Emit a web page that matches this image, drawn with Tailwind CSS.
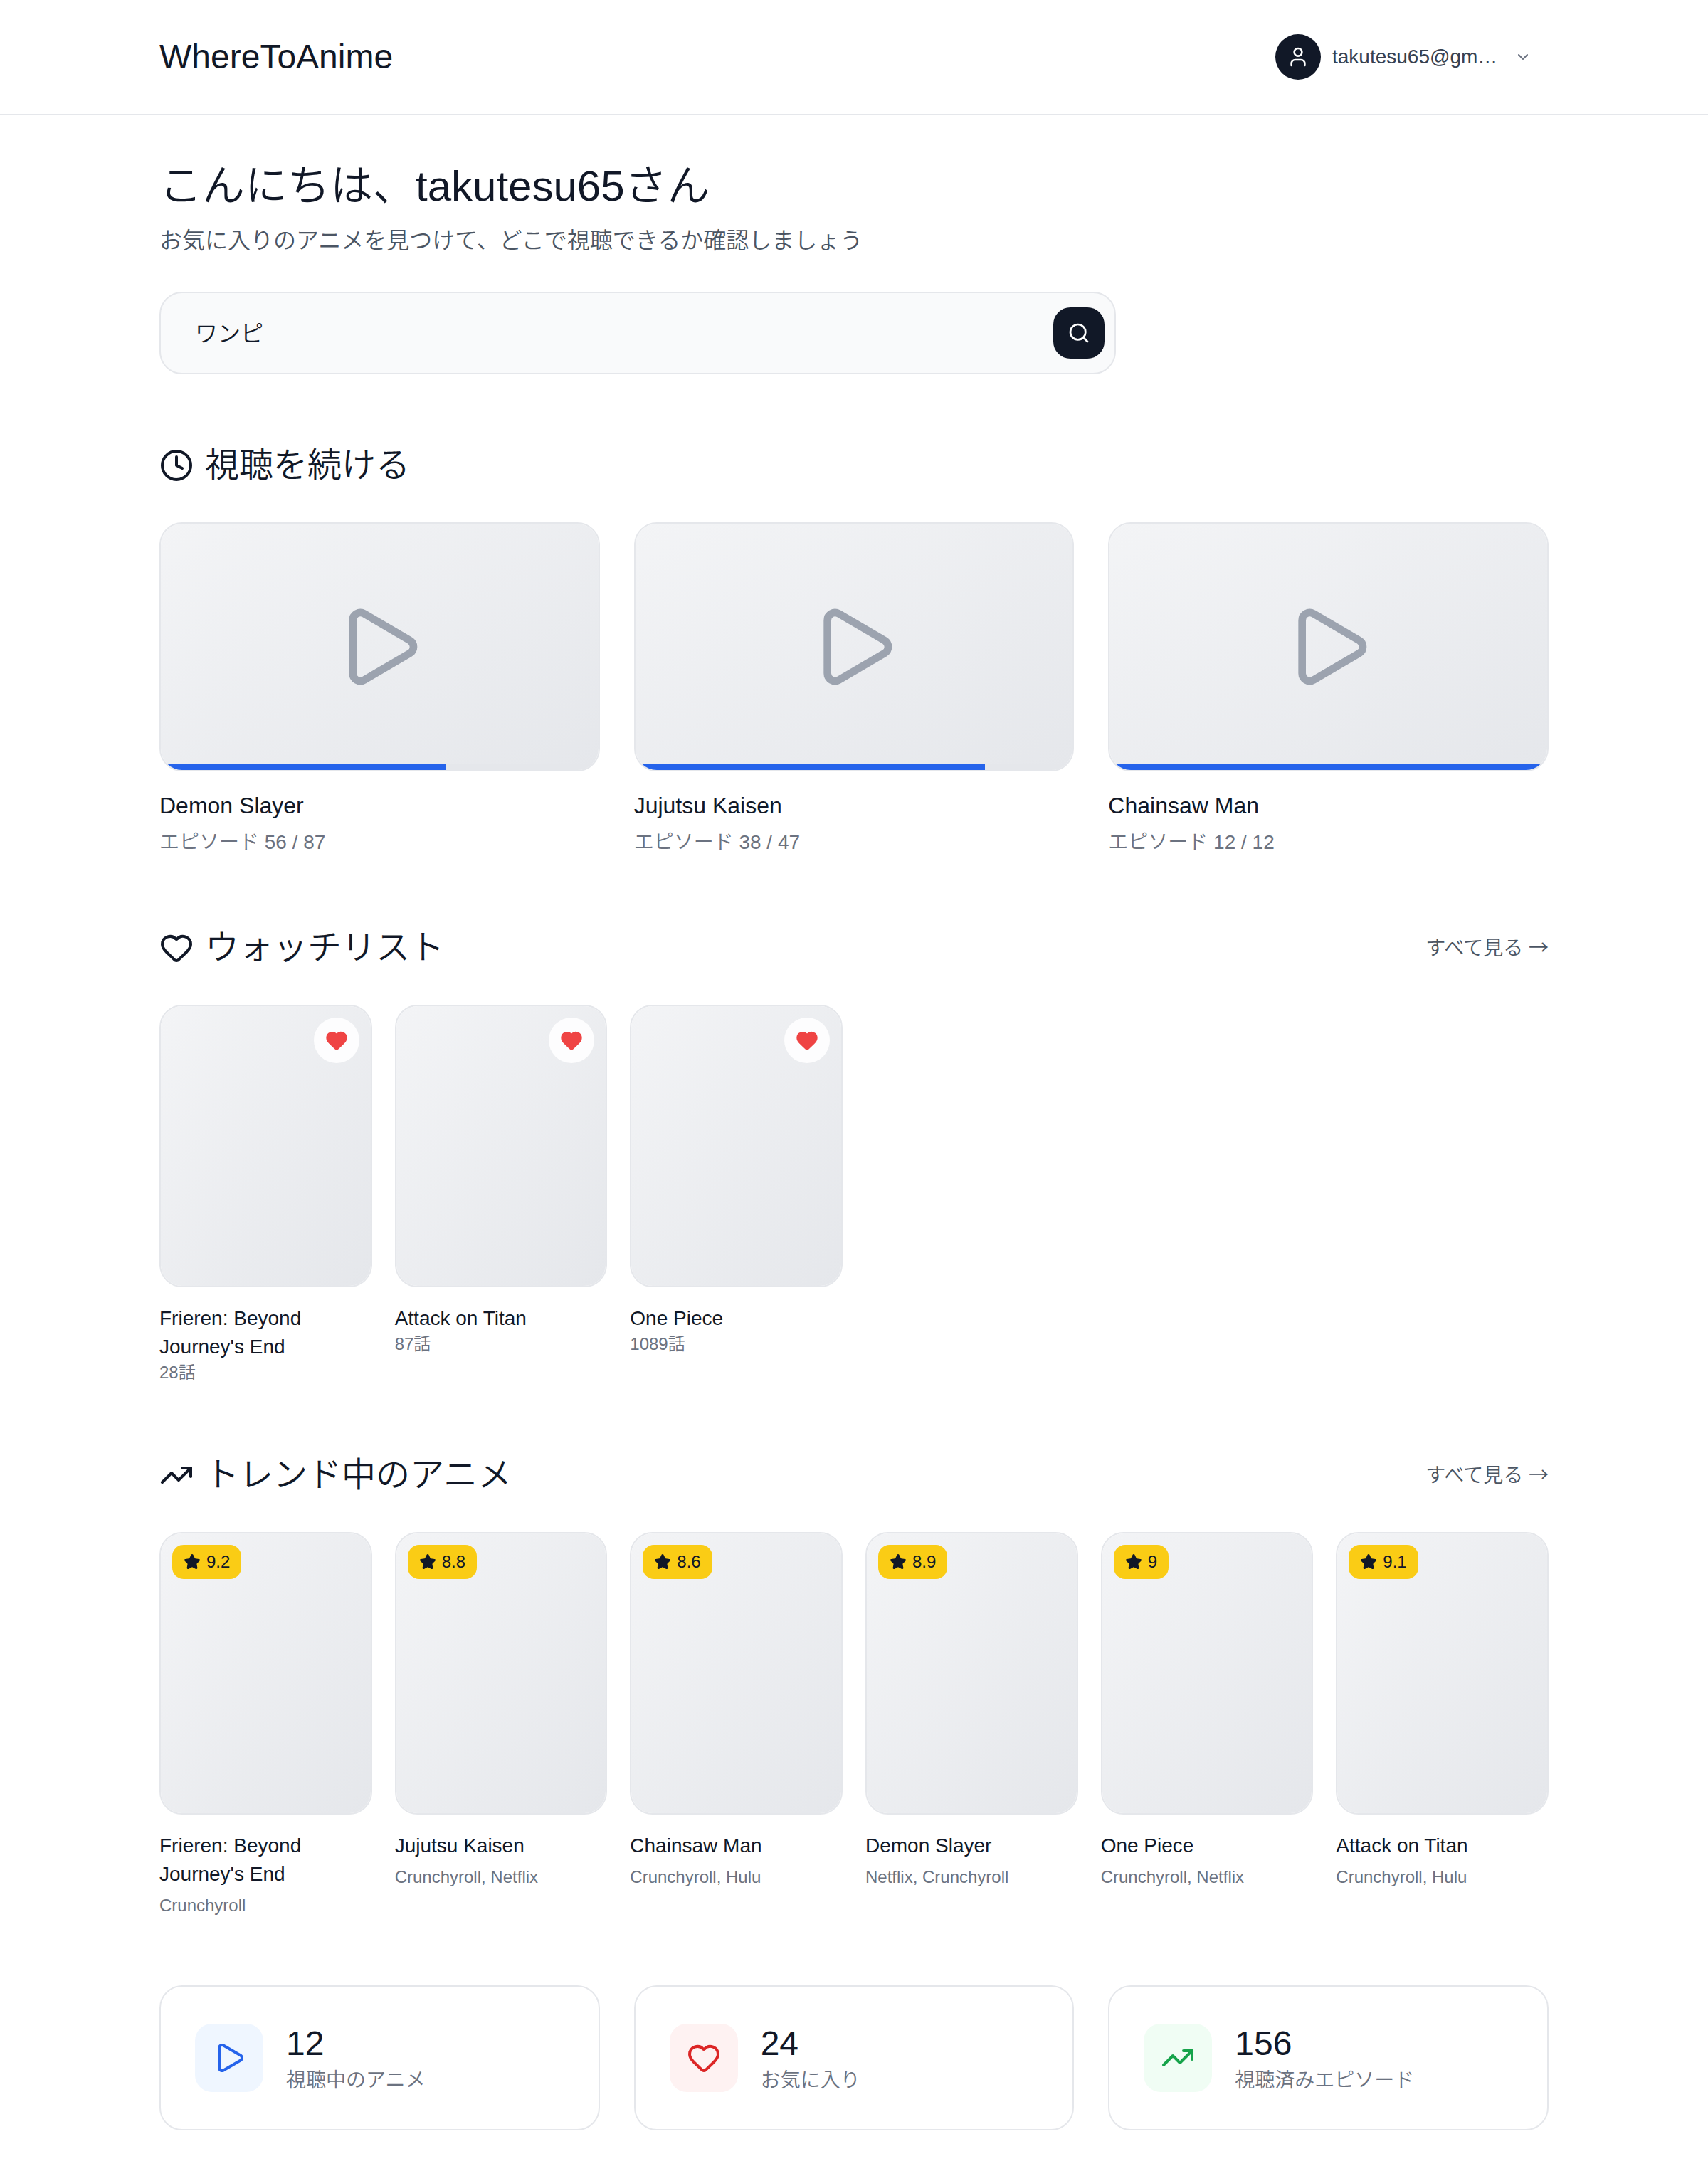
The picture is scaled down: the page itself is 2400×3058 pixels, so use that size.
<!DOCTYPE html>
<html lang="ja">
<head>
<meta charset="utf-8">
<meta name="viewport" content="width=device-width, initial-scale=1">
<title>WhereToAnime</title>
<script src="https://cdn.jsdelivr.net/npm/@tailwindcss/browser@4"></script>
</head>
<body class="min-h-screen bg-white font-['Liberation_Sans','Noto_Sans_CJK_JP',sans-serif] font-[350] text-[#111827]">

<svg class="hidden" aria-hidden="true">
  <symbol id="play" viewBox="0 0 24 24"><path d="M5 5a2 2 0 0 1 3.008-1.728l11.997 6.998a2 2 0 0 1 .003 3.458l-12 7A2 2 0 0 1 5 19z"/></symbol>
  <symbol id="heart" viewBox="0 0 24 24"><path d="M2 9.5a5.5 5.5 0 0 1 9.591-3.676.56.56 0 0 0 .818 0A5.49 5.49 0 0 1 22 9.5c0 2.29-1.5 4-3 5.5l-5.492 5.313a2 2 0 0 1-3 .019L5 15c-1.5-1.5-3-3.2-3-5.5"/></symbol>
  <symbol id="trend" viewBox="0 0 24 24"><path d="M16 7h6v6"/><path d="m22 7-8.5 8.5-5-5L2 17"/></symbol>
  <symbol id="star" viewBox="0 0 24 24"><path d="M11.525 2.295a.53.53 0 0 1 .95 0l2.31 4.679a2.123 2.123 0 0 0 1.595 1.16l5.166.756a.53.53 0 0 1 .294.904l-3.736 3.638a2.123 2.123 0 0 0-.611 1.878l.882 5.14a.53.53 0 0 1-.771.56l-4.618-2.428a2.122 2.122 0 0 0-1.973 0L6.396 21.01a.53.53 0 0 1-.77-.56l.881-5.139a2.122 2.122 0 0 0-.611-1.879L2.16 9.795a.53.53 0 0 1 .294-.906l5.165-.755a2.122 2.122 0 0 0 1.597-1.16z"/></symbol>
</svg>

<header class="border-b-2 border-[#e5e7eb]">
  <div class="mx-auto flex max-w-[2080px] items-center justify-between px-16 py-10">
    <a href="#" class="text-[48px] leading-[64px]">WhereToAnime</a>
    <button type="button" class="flex h-20 items-center gap-4 px-6">
      <span class="flex size-16 items-center justify-center rounded-full bg-[#111827] text-white">
        <svg class="size-8 fill-none stroke-current stroke-2 [stroke-linecap:round] [stroke-linejoin:round]" viewBox="0 0 24 24"><path d="M19 21v-2a4 4 0 0 0-4-4H9a4 4 0 0 0-4 4v2"/><circle cx="12" cy="7" r="4"/></svg>
      </span>
      <span class="w-60 text-left text-[28px] leading-[40px] text-[#374151]">takutesu65@gm…</span>
      <svg class="size-6 fill-none stroke-[#6b7280] stroke-2 [stroke-linecap:round] [stroke-linejoin:round]" viewBox="0 0 24 24"><path d="m6 9 6 6 6-6"/></svg>
    </button>
  </div>
</header>

<main class="mx-auto flex max-w-[2080px] flex-col gap-24 px-16 py-16">
  <section>
    <h1 class="text-[60px] leading-[72px]">こんにちは、takutesu65さん</h1>
    <p class="mt-4 text-[32px] leading-[48px] text-[#4b5563]">お気に入りのアニメを見つけて、どこで視聴できるか確認しましょう</p>
    <form class="relative mt-12 max-w-[1344px]" onsubmit="return false">
      <input type="text" aria-label="アニメを検索" value="ワンピ" class="block h-[116px] w-full rounded-[32px] border-2 border-[#e5e7eb] bg-[#f9fafb] pr-28 pb-1 pl-12 text-[32px] outline-none">
      <button type="submit" aria-label="検索" class="absolute top-[22px] right-4 flex size-18 items-center justify-center rounded-[24px] bg-[#111827] text-white">
        <svg class="size-8 fill-none stroke-current stroke-2 [stroke-linecap:round] [stroke-linejoin:round]" viewBox="0 0 24 24"><path d="m21 21-4.34-4.34"/><circle cx="11" cy="11" r="8"/></svg>
      </button>
    </form>
  </section>

  <section>
    <h2 class="flex items-center gap-4 text-[48px] leading-[64px]">
      <svg class="size-12 fill-none stroke-current stroke-2 [stroke-linecap:round] [stroke-linejoin:round]" viewBox="0 0 24 24"><path d="M12 6v6l4 2"/><circle cx="12" cy="12" r="10"/></svg>
      視聴を続ける
    </h2>
    <div class="mt-12 grid grid-cols-3 gap-12" id="continue"></div>
  </section>

  <section>
    <div class="flex items-center justify-between">
      <h2 class="flex items-center gap-4 text-[48px] leading-[64px]">
        <svg class="size-12 fill-none stroke-current stroke-2 [stroke-linecap:round] [stroke-linejoin:round]"><use href="#heart"/></svg>
        ウォッチリスト
      </h2>
      <a href="#" class="text-[28px] leading-[40px] text-[#4b5563]">すべて見る <span class="font-['Noto_Sans_CJK_JP',sans-serif]">→</span></a>
    </div>
    <div class="mt-12 grid grid-cols-6 gap-8" id="watchlist"></div>
  </section>

  <section>
    <div class="flex items-center justify-between">
      <h2 class="flex items-center gap-4 text-[48px] leading-[64px]">
        <svg class="size-12 fill-none stroke-current stroke-2 [stroke-linecap:round] [stroke-linejoin:round]"><use href="#trend"/></svg>
        トレンド中のアニメ
      </h2>
      <a href="#" class="text-[28px] leading-[40px] text-[#4b5563]">すべて見る <span class="font-['Noto_Sans_CJK_JP',sans-serif]">→</span></a>
    </div>
    <div class="mt-12 grid grid-cols-6 gap-8" id="trending"></div>
  </section>

  <section class="grid grid-cols-3 gap-12">
    <div class="flex items-center gap-8 rounded-[32px] border-2 border-[#e5e7eb] p-12">
      <div class="flex size-24 items-center justify-center rounded-[24px] bg-[#eff6ff] text-[#2563eb]">
        <svg class="size-12 fill-none stroke-current stroke-2 [stroke-linecap:round] [stroke-linejoin:round]"><use href="#play"/></svg>
      </div>
      <div>
        <p class="text-[48px] leading-[64px]">12</p>
        <p class="text-[28px] leading-[40px] text-[#6b7280]">視聴中のアニメ</p>
      </div>
    </div>
    <div class="flex items-center gap-8 rounded-[32px] border-2 border-[#e5e7eb] p-12">
      <div class="flex size-24 items-center justify-center rounded-[24px] bg-[#fef2f2] text-[#dc2626]">
        <svg class="size-12 fill-none stroke-current stroke-2 [stroke-linecap:round] [stroke-linejoin:round]"><use href="#heart"/></svg>
      </div>
      <div>
        <p class="text-[48px] leading-[64px]">24</p>
        <p class="text-[28px] leading-[40px] text-[#6b7280]">お気に入り</p>
      </div>
    </div>
    <div class="flex items-center gap-8 rounded-[32px] border-2 border-[#e5e7eb] p-12">
      <div class="flex size-24 items-center justify-center rounded-[24px] bg-[#f0fdf4] text-[#16a34a]">
        <svg class="size-12 fill-none stroke-current stroke-2 [stroke-linecap:round] [stroke-linejoin:round]"><use href="#trend"/></svg>
      </div>
      <div>
        <p class="text-[48px] leading-[64px]">156</p>
        <p class="text-[28px] leading-[40px] text-[#6b7280]">視聴済みエピソード</p>
      </div>
    </div>
  </section>
</main>

<script>
  const continuing = [
    ["Demon Slayer", 56, 87, 65],
    ["Jujutsu Kaisen", 38, 47, 80],
    ["Chainsaw Man", 12, 12, 100],
  ];
  const watchlist = [
    ["Frieren: Beyond Journey's End", 28],
    ["Attack on Titan", 87],
    ["One Piece", 1089],
  ];
  const trending = [
    ["Frieren: Beyond Journey's End", "9.2", "Crunchyroll"],
    ["Jujutsu Kaisen", "8.8", "Crunchyroll, Netflix"],
    ["Chainsaw Man", "8.6", "Crunchyroll, Hulu"],
    ["Demon Slayer", "8.9", "Netflix, Crunchyroll"],
    ["One Piece", "9", "Crunchyroll, Netflix"],
    ["Attack on Titan", "9.1", "Crunchyroll, Hulu"],
  ];

  document.getElementById("continue").innerHTML = continuing.map(([title, seen, total, percent]) => `
    <article>
      <div class="overflow-hidden rounded-[32px] border-2 border-[#e5e7eb]">
        <div class="relative flex aspect-video items-center justify-center bg-linear-to-br/srgb from-[#f3f4f6] to-[#e5e7eb]">
          <svg class="size-32 fill-none stroke-[#9ca3af] stroke-2 [stroke-linecap:round] [stroke-linejoin:round]"><use href="#play"/></svg>
          <div class="absolute inset-x-0 bottom-0 h-2 bg-[#e5e7eb]"><div class="h-full bg-[#2563eb]" style="width:${percent}%"></div></div>
        </div>
      </div>
      <h3 class="mt-6 text-[32px] leading-[48px]">${title}</h3>
      <p class="mt-2 text-[28px] leading-[40px] text-[#6b7280]">エピソード ${seen} / ${total}</p>
    </article>`).join("");

  document.getElementById("watchlist").innerHTML = watchlist.map(([title, episodes]) => `
    <article>
      <div class="overflow-hidden rounded-[32px] border-2 border-[#e5e7eb]">
        <div class="relative aspect-3/4 bg-linear-to-br/srgb from-[#f3f4f6] to-[#e5e7eb]">
          <button type="button" aria-label="お気に入りから削除" class="absolute top-4 right-4 flex size-16 items-center justify-center rounded-full bg-white/90">
            <svg class="size-8 fill-[#ef4444] stroke-[#ef4444] stroke-2 [stroke-linecap:round] [stroke-linejoin:round]"><use href="#heart"/></svg>
          </button>
        </div>
      </div>
      <h3 class="mt-6 text-[28px] leading-[40px]">${title}</h3>
      <p class="text-[24px] leading-[32px] text-[#6b7280]">${episodes}話</p>
    </article>`).join("");

  document.getElementById("trending").innerHTML = trending.map(([title, score, services]) => `
    <article>
      <div class="overflow-hidden rounded-[32px] border-2 border-[#e5e7eb]">
        <div class="relative aspect-3/4 bg-linear-to-br/srgb from-[#f3f4f6] to-[#e5e7eb]">
          <span class="absolute top-4 left-4 flex items-center gap-2 rounded-[16px] bg-[#facc15] px-4 py-2 text-[24px] leading-[32px]">
            <svg class="size-6 fill-current stroke-current stroke-2 [stroke-linecap:round] [stroke-linejoin:round]"><use href="#star"/></svg>
            ${score}
          </span>
        </div>
      </div>
      <h3 class="mt-6 text-[28px] leading-[40px]">${title}</h3>
      <p class="mt-2 text-[24px] leading-[32px] text-[#6b7280]">${services}</p>
    </article>`).join("");
</script>
</body>
</html>
